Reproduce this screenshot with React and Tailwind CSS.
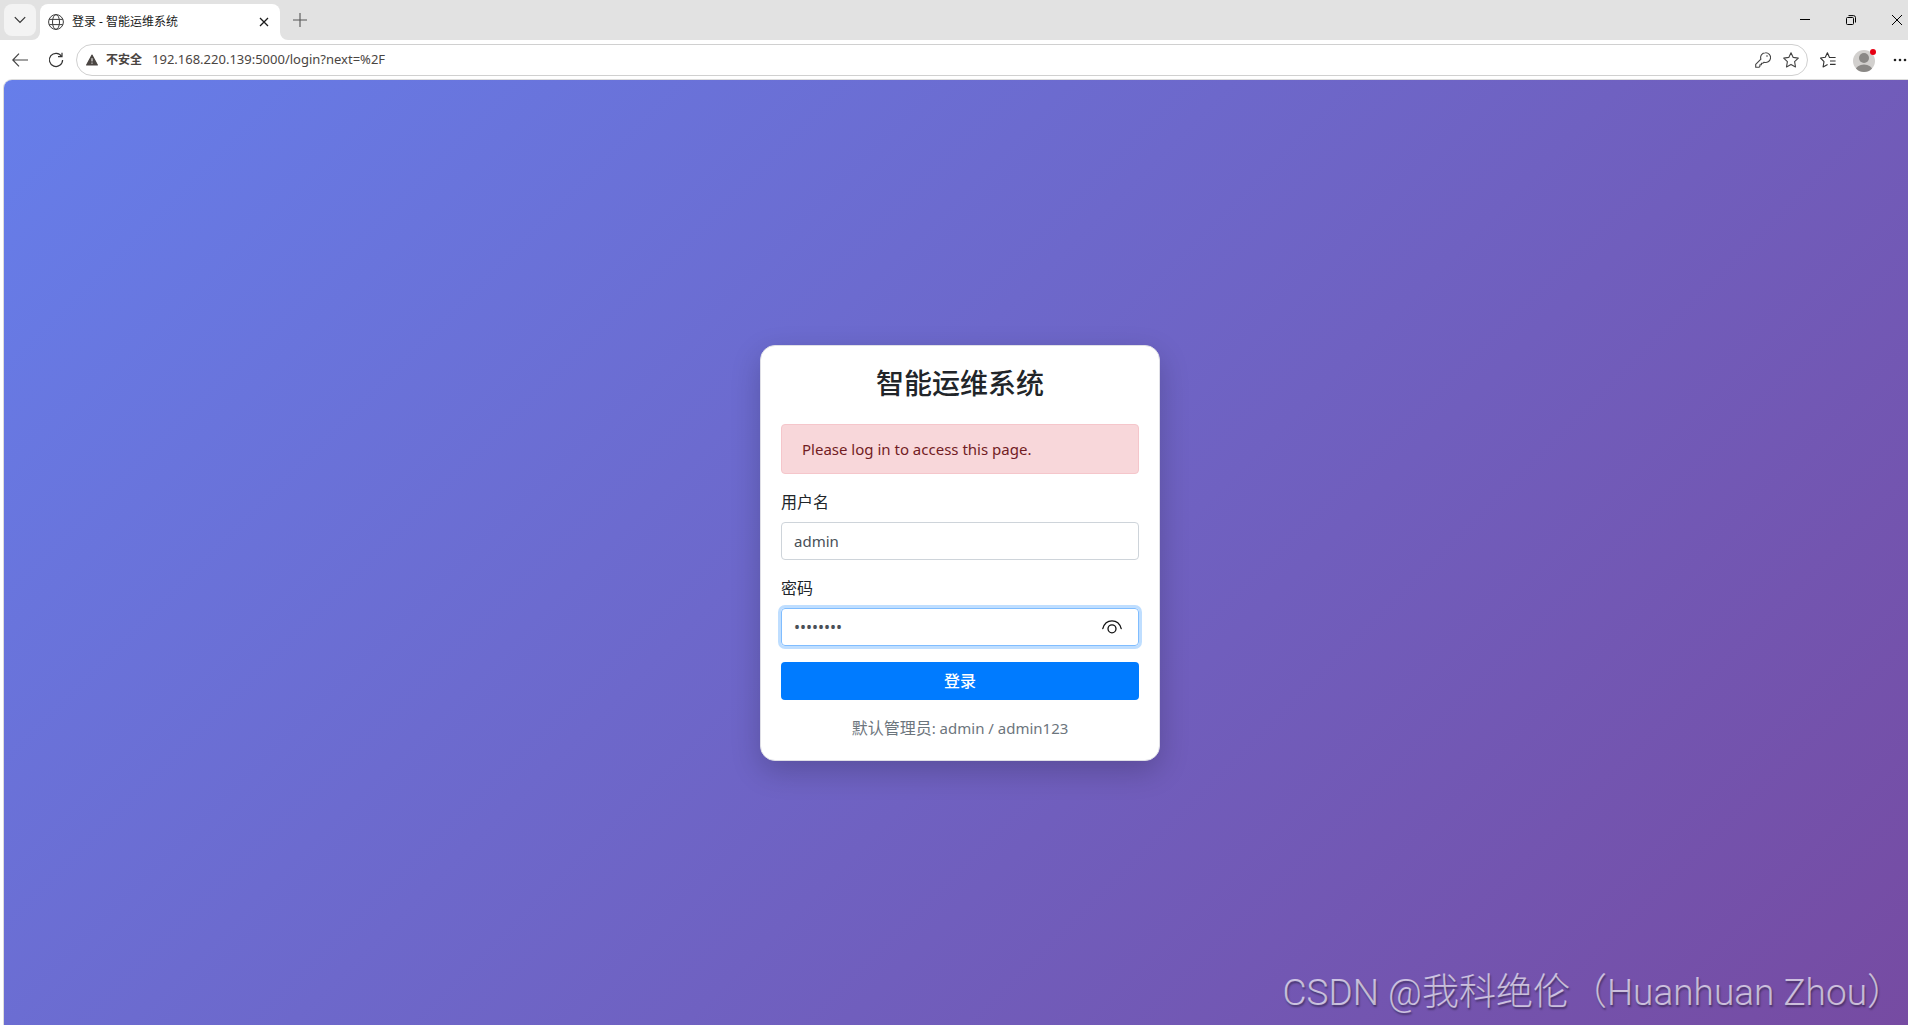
const IconButton = ({ label, className = '', children }) => (
  <button type="button" aria-label={label} className={`flex shrink-0 items-center justify-center ${className}`}>
    {children}
  </button>
);

const TabStrip = () => (
  <div className="flex h-10 items-end overflow-hidden bg-[#e2e2e2] pl-1">
    <IconButton label="Tab actions" className="mb-1 size-8 rounded-lg bg-[#f3f3f3]">
      <svg width="12" height="8" viewBox="0 0 12 8" fill="none" stroke="#333" strokeWidth="1.2">
        <path d="M0.8 1.2 L6 6.4 L11.2 1.2" />
      </svg>
    </IconButton>

    <svg className="ml-[-4px] shrink-0" width="8" height="8" viewBox="0 0 8 8">
      <path d="M8 0 V8 H0 A8 8 0 0 0 8 0Z" fill="#fff" />
    </svg>
    <div className="flex h-9 w-60 shrink-0 items-center rounded-t-lg bg-white px-2">
      <svg width="16" height="16" viewBox="0 0 16 16" fill="none" stroke="#3d3d3d" strokeWidth="1">
        <circle cx="8" cy="8" r="7.4" />
        <ellipse cx="8" cy="8" rx="3.5" ry="7.4" />
        <path d="M1.2 5.4 H14.8 M1.2 10.6 H14.8" />
      </svg>
      <span className="ml-2 flex-1 truncate text-xs text-[#1b1b1b]">登录 - 智能运维系统</span>
      <IconButton label="Close tab" className="size-4">
        <svg width="10" height="10" viewBox="0 0 10 10" stroke="#1b1b1b" strokeWidth="1.3">
          <path d="M1 1 L9 9 M9 1 L1 9" />
        </svg>
      </IconButton>
    </div>
    <svg className="shrink-0" width="8" height="8" viewBox="0 0 8 8">
      <path d="M0 0 V8 H8 A8 8 0 0 1 0 0Z" fill="#fff" />
    </svg>

    <IconButton label="New tab" className="mb-1 h-8 w-6">
      <svg width="14" height="14" viewBox="0 0 14 14" stroke="#555" strokeWidth="1.1">
        <path d="M7 0 V14 M0 7 H14" />
      </svg>
    </IconButton>

    <div className="ml-auto flex h-10">
      <IconButton label="Minimize" className="w-[46px]">
        <svg width="10" height="10" viewBox="0 0 10 10" stroke="#000">
          <path d="M0 4.5 H10" />
        </svg>
      </IconButton>
      <IconButton label="Restore" className="w-[46px]">
        <svg width="10" height="10" viewBox="0 0 10 10" fill="none" stroke="#000">
          <rect x="0.5" y="2.5" width="7" height="7" rx="1" />
          <path d="M2.5 0.6 H7.5 A2 2 0 0 1 9.5 2.5 V7.5" />
        </svg>
      </IconButton>
      <IconButton label="Close window" className="w-[34px] pl-3">
        <svg width="10" height="10" viewBox="0 0 10 10" stroke="#000">
          <path d="M0 0 L10 10 M10 0 L0 10" />
        </svg>
      </IconButton>
    </div>
  </div>
);

const Toolbar = () => (
  <div className="flex h-10 items-center bg-white pl-1">
    <IconButton label="Back" className="size-8">
      <svg width="16" height="14" viewBox="0 0 16 14" fill="none" stroke="#444" strokeWidth="1.2">
        <path d="M7 0.6 L0.8 7 L7 13.4 M0.8 7 H16" />
      </svg>
    </IconButton>
    <IconButton label="Refresh" className="ml-1 size-8">
      <svg width="16" height="16" viewBox="0 0 16 16" fill="none" stroke="#333" strokeWidth="1.2">
        <path d="M13.6 4.4 A6.6 6.6 0 1 0 14.6 8" />
        <path d="M14 0.8 V4.6 H10" />
      </svg>
    </IconButton>

    <form className="ml-1 flex h-8 flex-1 items-center rounded-full border border-[#d0d0d0] bg-white pr-0.5 pl-2">
      <svg className="ml-px" width="12" height="12" viewBox="0 0 12 12">
        <path d="M6 1 L11.4 11 H0.6 Z" fill="#4a4542" stroke="#4a4542" strokeWidth="1.1" strokeLinejoin="round" />
        <path d="M6 4.2 V7.4 M6 8.6 V9.7" stroke="#fff" strokeWidth="1" />
      </svg>
      <span className="ml-2 shrink-0 text-xs font-bold text-[#4a4542]">不安全</span>
      <input
        type="text"
        aria-label="Address"
        defaultValue="192.168.220.139:5000/login?next=%2F"
        className="ml-[10px] min-w-0 flex-1 text-[13px] text-[#4a4542] outline-none"
      />
      <IconButton label="Password" className="w-7">
        <svg width="16" height="16" viewBox="0 0 16 16" fill="none" stroke="#444" strokeWidth="1.1" strokeLinejoin="round">
          <path d="M10.4 0.7 A4.9 4.9 0 1 1 9 10.2 L7.8 11.3 H6.4 V12.8 H4.9 V14.3 L3.9 15.3 H0.7 V12.4 L5.9 7.2 A4.9 4.9 0 0 1 10.4 0.7Z" />
          <circle cx="12" cy="4" r="0.8" fill="#444" stroke="none" />
        </svg>
      </IconButton>
      <IconButton label="Add to favorites" className="w-7">
        <svg width="16" height="16" viewBox="0 0 16 16" fill="none" stroke="#444" strokeWidth="1.1" strokeLinejoin="round">
          <path d="M8 0.8 L10.2 5.4 L15.3 6.1 L11.6 9.7 L12.5 14.9 L8 12.4 L3.5 14.9 L4.4 9.7 L0.7 6.1 L5.8 5.4Z" />
        </svg>
      </IconButton>
    </form>

    <IconButton label="Favorites" className="ml-1 size-8">
      <svg width="16" height="16" viewBox="0 0 16 16" fill="none" stroke="#333" strokeWidth="1.1" strokeLinejoin="round">
        <path d="M15.6 5.5 H9.5 L7.4 0.8 L5.3 5.3 L0.5 6 L4 9.6 L3.1 14.9 L7.6 12.6" />
        <path d="M10 9 H15.6 M10 12.4 H15.6" />
      </svg>
    </IconButton>
    <IconButton label="Profile" className="ml-1 size-8">
      <svg width="24" height="24" viewBox="0 0 24 24">
        <defs>
          <clipPath id="avatar">
            <circle cx="12" cy="13" r="11" />
          </clipPath>
        </defs>
        <circle cx="12" cy="13" r="11" fill="#d2d0ce" />
        <g clipPath="url(#avatar)" fill="#8a8886">
          <circle cx="12" cy="10" r="5" />
          <ellipse cx="12" cy="22" rx="8.4" ry="5.4" />
        </g>
        <circle cx="21" cy="4" r="3" fill="#e60012" />
      </svg>
    </IconButton>
    <IconButton label="Settings and more" className="ml-1 w-6 pl-2">
      <svg className="shrink-0" width="14" height="4" viewBox="0 0 14 4" fill="#222">
        <circle cx="2" cy="2" r="1.3" />
        <circle cx="7" cy="2" r="1.3" />
        <circle cx="12" cy="2" r="1.3" />
      </svg>
    </IconButton>
  </div>
);

const LoginCard = () => (
  <div className="w-[400px] rounded-[15px] border border-[#dfdfe6] bg-white p-5 text-[#212529] shadow-[0_10px_30px_rgba(0,0,0,0.2)]">
    <h3 className="mb-6 text-center text-[28px] leading-[34px] font-medium">智能运维系统</h3>
    <div role="alert" className="mb-4 rounded border border-[#f5c6cb] bg-[#f8d7da] px-5 py-3 text-[15px] leading-6 text-[#721c24]">
      Please log in to access this page.
    </div>
    <form>
      <label htmlFor="username" className="mb-2 block leading-6">用户名</label>
      <input
        id="username"
        type="text"
        defaultValue="admin"
        className="mb-4 block h-[38px] w-full rounded border border-[#ced4da] px-3 text-[15px] text-[#495057] outline-none"
      />
      <label htmlFor="password" className="mb-2 block leading-6">密码</label>
      <div className="mb-4 flex h-[38px] items-center rounded border border-[#80bdff] pr-4 pl-3 ring-3 ring-[#007bff]/25">
        <input
          id="password"
          type="password"
          defaultValue="admin123"
          className="min-w-0 flex-1 text-base text-[#495057] outline-none"
        />
        <IconButton label="Show password">
          <svg width="20" height="14" viewBox="0 0 20 14" fill="none" stroke="#111" strokeWidth="1.3" strokeLinecap="round">
            <path d="M0.8 8.6 C2.2 3.6 5.8 0.9 10 0.9 S17.8 3.6 19.2 8.6" />
            <circle cx="10" cy="8.8" r="4" />
          </svg>
        </IconButton>
      </div>
      <button type="submit" className="block h-[38px] w-full rounded bg-[#007bff] font-medium text-white">
        登录
      </button>
    </form>
    <p className="mt-4 text-center leading-6 text-[#6c757d]">
      默认管理员<span className="text-[15px]">: admin / admin123</span>
    </p>
  </div>
);

export default function App() {
  return (
    <div className="flex h-screen flex-col overflow-hidden bg-white font-['Noto_Sans','Noto_Sans_CJK_SC',sans-serif]">
      <TabStrip />
      <Toolbar />
      <main className="relative ml-1 flex flex-1 items-center justify-center rounded-tl-lg bg-[linear-gradient(135deg,#667eea_0%,#764ba2_100%)] pl-2 shadow-[0_0_0_1px_#dcdcdc]">
        <LoginCard />
        <p className="absolute right-1 bottom-1 font-['Roboto','Noto_Sans_CJK_SC',sans-serif] text-[37px] leading-[56px] font-light whitespace-pre text-white/65 [text-shadow:1px_2px_2px_rgba(0,0,0,0.4)]">
          CSDN @我科绝伦（Huanhuan Zhou）
        </p>
      </main>
    </div>
  );
}
